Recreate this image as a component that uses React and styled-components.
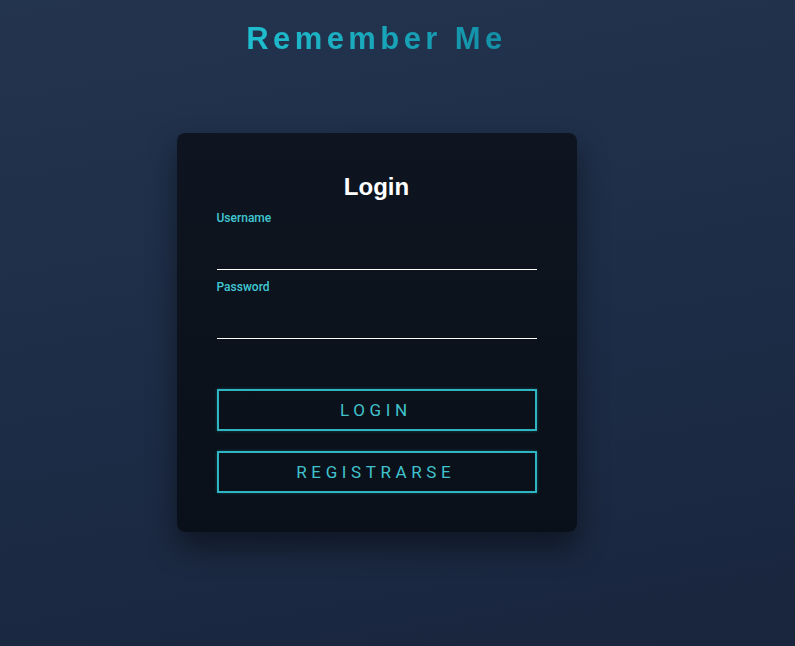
import React from "react";
import styled, { createGlobalStyle } from "styled-components";

const Global = createGlobalStyle`
  html, body { margin: 0; padding: 0; height: 100%; }
  body {
    background: linear-gradient(170deg, #23344f 0%, #1d2c46 55%, #19253d 100%);
    font-family: "Liberation Sans", Arial, sans-serif;
    min-height: 646px;
  }
`;

const Page = styled.div`
  width: 753px;
  display: flex;
  flex-direction: column;
  align-items: center;
`;

const Title = styled.h1`
  margin: 18px 0 0;
  font-family: "Liberation Sans", Arial, sans-serif;
  font-weight: 700;
  font-size: 31px;
  line-height: 42px;
  letter-spacing: 4.4px;
  background: linear-gradient(90deg, #1fbfcf, #138fa6);
  -webkit-background-clip: text;
  background-clip: text;
  color: transparent;
`;

const Card = styled.form`
  margin-top: 73px;
  width: 400px;
  box-sizing: border-box;
  padding: 40px 40px 39px;
  background: linear-gradient(180deg, #0e1520 0%, #0a1019 100%);
  border-radius: 8px;
  box-shadow: 0 15px 30px rgba(0, 0, 0, 0.45);
  display: flex;
  flex-direction: column;
`;

const Heading = styled.h2`
  margin: 0 0 10px;
  text-align: center;
  color: #ffffff;
  font-family: "Liberation Sans", Arial, sans-serif;
  font-weight: 700;
  font-size: 24px;
  line-height: 28px;
`;

const Field = styled.label`
  display: flex;
  flex-direction: column;
  margin-bottom: 10px;
`;

const Label = styled.span`
  color: #40c8d2;
  font-family: Roboto, "Liberation Sans", sans-serif;
  font-weight: 500;
  font-size: 12px;
  line-height: 14px;
`;

const Input = styled.input`
  height: 45px;
  box-sizing: border-box;
  background: transparent;
  border: none;
  border-bottom: 1px solid #ffffff;
  color: #ffffff;
  outline: none;
  padding: 0;
  font-size: 14px;
`;

const Button = styled.button`
  height: 42px;
  margin-top: ${(p) => p.$top}px;
  background: transparent;
  border: 2px solid #2eb5c1;
  color: #40c3cc;
  font-family: Roboto, "Liberation Sans", sans-serif;
  font-size: 17px;
  letter-spacing: 4.6px;
  padding-left: 4.6px;
  text-transform: uppercase;
  cursor: pointer;
  box-shadow: 0 0 3px rgba(46, 181, 193, 0.35);
`;

export default function App() {
  return (
    <>
      <Global />
      <Page>
        <Title>Remember Me</Title>
        <Card onSubmit={(e) => e.preventDefault()}>
          <Heading>Login</Heading>
          <Field>
            <Label>Username</Label>
            <Input type="text" />
          </Field>
          <Field>
            <Label>Password</Label>
            <Input type="password" />
          </Field>
          <Button $top={40}>Login</Button>
          <Button $top={20} type="button">Registrarse</Button>
        </Card>
      </Page>
    </>
  );
}
